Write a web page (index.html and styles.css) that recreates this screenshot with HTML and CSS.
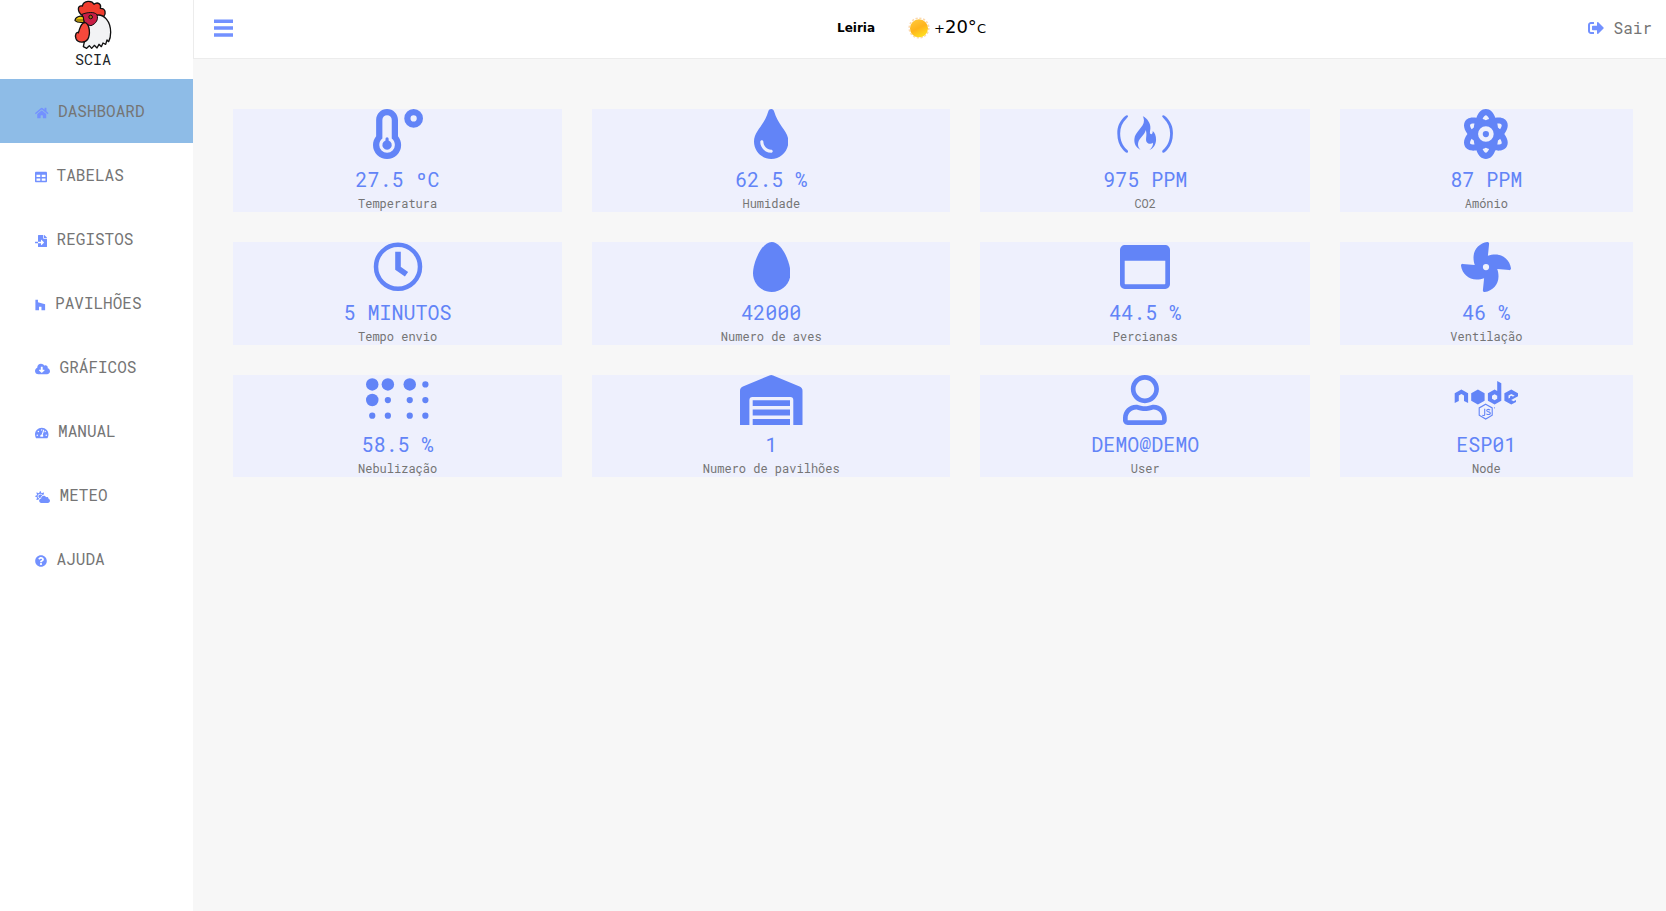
FILE: index.html
```html
<!DOCTYPE html>
<html lang="pt">
<head>
<meta charset="utf-8">
<title>SCIA</title>
<link rel="stylesheet" href="styles.css">
</head>
<body>
<div class="app">
  <aside class="sidebar">
    <div class="brand">
      <svg class="brand-logo" viewBox="218 0 120 150">
        <path d="M247 47C230 37 230 14 246 18C250 1 275 0 281 13C292 4 304 12 300 25C316 25 318 40 310 50L290 58Z" fill="#f03d2e" stroke="#111" stroke-width="4" stroke-linejoin="round"/>
        <path d="M286 46C312 40 331 65 331 97C331 109 329 118 325 125L320 120L316 133L308 129L303 140L296 133L290 144L282 136L274 145L267 137L259 145L249 140L252 126L264 104L262 74Z" fill="#f2f3f5" stroke="#111" stroke-width="4" stroke-linejoin="round"/>
        <path d="M245 43C260 37 281 34 290 44C295 59 287 71 272 77L254 73Z" fill="#c81e45" stroke="#111" stroke-width="3"/>
        <path d="M253 67C270 72 270 105 262 118C255 129 233 130 227 116C222 102 230 95 234 98C239 88 238 72 253 67Z" fill="#f6483b" stroke="#111" stroke-width="4"/>
        <path d="M224 62C224 52 240 45 249 51L251 68C242 66 232 70 224 62Z" fill="#f2c90d" stroke="#111" stroke-width="3.500"/>
        <path d="M228 60H248" stroke="#111" stroke-width="2"/>
        <circle cx="271" cy="51" r="5.500" fill="#a06a10" stroke="#111" stroke-width="3"/>
      </svg>
      <span class="brand-name">SCIA</span>
    </div>
    <nav class="menu">
      <a class="menu-item active"><svg viewBox="0 0 576 512"><path d="M280.37 148.26L96 300.11V464a16 16 0 0 0 16 16l112.06-.29a16 16 0 0 0 15.92-16V368a16 16 0 0 1 16-16h64a16 16 0 0 1 16 16v95.64a16 16 0 0 0 16 16.05L464 480a16 16 0 0 0 16-16V300L295.67 148.26a12.19 12.19 0 0 0-15.3 0zM571.6 251.47L488 182.56V44.05a12 12 0 0 0-12-12h-56a12 12 0 0 0-12 12v72.61L318.47 43a48 48 0 0 0-61 0L4.34 251.47a12 12 0 0 0-1.6 16.9l25.5 31A12 12 0 0 0 45.15 301l235.22-193.74a12.19 12.19 0 0 1 15.3 0L530.9 301a12 12 0 0 0 16.9-1.6l25.5-31a12 12 0 0 0-1.7-16.93z"/></svg> DASHBOARD</a>
      <a class="menu-item"><svg viewBox="0 0 512 512"><path d="M464 32H48C21.49 32 0 53.49 0 80v352c0 26.51 21.49 48 48 48h416c26.51 0 48-21.49 48-48V80c0-26.51-21.49-48-48-48zM224 416H64v-96h160v96zm0-160H64v-96h160v96zm224 160H288v-96h160v96zm0-160H288v-96h160v96z"/></svg> TABELAS</a>
      <a class="menu-item"><svg viewBox="0 0 512 512"><path d="M16 288c-8.8 0-16 7.2-16 16v32c0 8.8 7.2 16 16 16h112v-64zm489-183L407.1 7c-4.500-4.500-10.600-7-17-7H384v128h128v-6.100c0-6.300-2.500-12.400-7-16.900zm-153 31V0H152c-13.300 0-24 10.700-24 24v264h128v-65.200c0-14.300 17.300-21.400 27.400-11.300L379 308c6.600 6.700 6.600 17.400 0 24l-95.700 96.400c-10.100 10.100-27.400 3-27.400-11.300V352H128v136c0 13.300 10.700 24 24 24h336c13.300 0 24-10.700 24-24V160H376c-13.200 0-24-10.800-24-24z"/></svg> REGISTOS</a>
      <a class="menu-item"><svg viewBox="0 0 448 512"><path d="M275.9 330.7H171.3V480H17V32h109.5v104.5l305.1 85.6V480H275.9z"/></svg> PAVILHÕES</a>
      <a class="menu-item"><svg viewBox="0 0 640 512"><path d="M537.6 226.6c4.1-10.7 6.4-22.4 6.4-34.6 0-53-43-96-96-96-19.7 0-38.1 6-53.3 16.2C367 64.2 315.3 32 256 32c-88.4 0-160 71.6-160 160 0 2.7.1 5.4.2 8.1C40.2 219.8 0 273.2 0 336c0 79.5 64.5 144 144 144h368c70.7 0 128-57.3 128-128 0-61.9-44-113.6-102.4-125.4zm-132.9 88.7L299.3 420.7c-6.2 6.2-16.4 6.2-22.6 0L171.3 315.3c-10.1-10.1-2.9-27.3 11.3-27.3H248V176c0-8.8 7.2-16 16-16h48c8.8 0 16 7.2 16 16v112h65.4c14.2 0 21.4 17.2 11.3 27.3z"/></svg> GRÁFICOS</a>
      <a class="menu-item"><svg viewBox="0 0 576 512"><path d="M288 32C128.94 32 0 160.94 0 320c0 52.8 14.25 102.26 39.06 144.8 5.61 9.62 16.3 15.2 27.44 15.2h443c11.14 0 21.83-5.58 27.44-15.2C561.75 422.26 576 372.8 576 320c0-159.06-128.94-288-288-288zm0 64c14.71 0 26.58 10.13 30.32 23.65-1.11 2.26-2.64 4.23-3.45 6.67l-9.22 27.67c-5.13 3.49-10.97 6.01-17.64 6.01-17.67 0-32-14.33-32-32S270.33 96 288 96zM96 384c-17.67 0-32-14.33-32-32s14.33-32 32-32 32 14.33 32 32-14.33 32-32 32zm48-160c-17.67 0-32-14.33-32-32s14.33-32 32-32 32 14.33 32 32-14.33 32-32 32zm246.77-72.41l-61.33 184C343.13 347.33 352 364.54 352 384c0 11.72-3.38 22.55-8.88 32H232.88c-5.5-9.45-8.88-20.28-8.88-32 0-33.94 26.5-61.43 59.9-63.59l61.34-184.01c4.17-12.56 17.73-19.45 30.36-15.17 12.57 4.19 19.35 17.79 15.17 30.36zm14.66 57.2l15.52-46.55c3.47-1.29 7.13-2.23 11.05-2.23 17.67 0 32 14.33 32 32s-14.33 32-32 32c-11.38-.01-20.89-6.28-26.57-15.22zM480 384c-17.67 0-32-14.33-32-32s14.33-32 32-32 32 14.33 32 32-14.33 32-32 32z"/></svg> MANUAL</a>
      <a class="menu-item"><svg viewBox="0 0 640 512"><path d="M575.2 325.7c.2-1.900.8-3.700.8-5.600 0-35.300-28.700-64-64-64-12.600 0-24.200 3.800-34.100 10-17.600-38.800-56.500-66-101.900-66-61.800 0-112 50.100-112 112 0 3 .7 5.800.9 8.700-49.600 3.700-88.900 44.700-88.900 95.300 0 53 43 96 96 96h272c53 0 96-43 96-96 0-42.100-27.200-77.400-64.800-90.400z"/><path fill-rule="evenodd" d="M144.800 303.100c-43.700-43.700-43.700-114.700 0-158.300 43.700-43.700 114.700-43.700 158.400 0 9.700 9.700 16.900 20.900 22.300 32.700 9.800-3.700 20.100-6 30.700-7.500L386 81.100c4-11.900-7.300-23.100-19.200-19.200L279 91.200 237.500 8.400C232-2.800 216-2.800 210.400 8.400L169 91.200 81.100 61.900C69.300 58 58 69.300 61.900 81.100l29.300 87.800-82.800 41.500c-11.200 5.600-11.200 21.500 0 27.100l82.800 41.400-29.300 87.800c-4 11.900 7.300 23.100 19.200 19.200l76.100-25.400c6.100-14.900 14.900-28.800 26.200-40.800-14-4-27-6-38.600-16.600z"/><path d="M144 224c0 44 36 80 80 80 4 0 6-1 9-1 8-50 38-90 76-112-14-33-46-47-85-47-44 0-80 36-80 80z"/></svg> METEO</a>
      <a class="menu-item"><svg viewBox="0 0 512 512"><path d="M504 256c0 136.997-111.043 248-248 248S8 392.997 8 256C8 119.083 119.043 8 256 8s248 111.083 248 248zM262.655 90c-54.497 0-89.255 22.957-116.549 63.758-3.536 5.286-2.353 12.415 2.715 16.258l34.699 26.31c5.205 3.947 12.621 3.008 16.665-2.122 17.864-22.658 30.113-35.797 57.303-35.797 20.429 0 45.698 13.148 45.698 32.958 0 14.976-12.363 22.667-32.534 33.976C247.128 238.528 216 254.941 216 296v4c0 6.627 5.373 12 12 12h56c6.627 0 12-5.373 12-12v-1.333c0-28.462 83.186-29.647 83.186-106.667 0-58.002-60.165-102-116.531-102zM256 338c-25.365 0-46 20.635-46 46 0 25.364 20.635 46 46 46s46-20.636 46-46c0-25.365-20.635-46-46-46z"/></svg> AJUDA</a>
    </nav>
  </aside>
  <div class="page">
    <header class="topbar">
      <svg class="burger" viewBox="0 0 19 18"><path d="M0 .500h19v3.500H0zM0 7.300h19v3.500H0zM0 14.200h19v3.500H0z"/></svg>
      <div class="weather">
        <span class="city">Leiria</span>
        <svg class="sun" viewBox="0 0 22 22">
          <defs><linearGradient id="sunfill" x1="0.2" y1="0" x2="0.7" y2="1"><stop offset="0" stop-color="#ffc93c"/><stop offset=".5" stop-color="#ffb31a"/><stop offset="1" stop-color="#ffe21f"/></linearGradient></defs>
          <circle cx="11" cy="11" r="9.800" fill="none" stroke="#fcd9ae" stroke-width="1.600" stroke-dasharray="2.200 1.650"/>
          <circle cx="11" cy="11.300" r="9" fill="url(#sunfill)"/>
        </svg>
        <span class="temp"><small>+</small>20°<small class="unit">C</small></span>
      </div>
      <a class="logout"><svg viewBox="0 0 512 512"><path d="M497 273L329 441c-15 15-41 4.500-41-17v-96H152c-13.300 0-24-10.700-24-24v-96c0-13.300 10.700-24 24-24h136V88c0-21.400 25.900-32 41-17l168 168c9.300 9.400 9.300 24.600 0 34zM192 436v-40c0-6.600-5.400-12-12-12H96c-17.700 0-32-14.300-32-32V160c0-17.700 14.300-32 32-32h84c6.600 0 12-5.400 12-12V76c0-6.600-5.400-12-12-12H96c-53 0-96 43-96 96v192c0 53 43 96 96 96h84c6.600 0 12-5.400 12-12z"/></svg> Sair</a>
    </header>
    <main class="cards">
      <section class="card">
        <svg viewBox="0 0 512 512"><path fill-rule="evenodd" d="M256 112C256 50 206 0 144 0S32 50 32 112V278.500C12 303 0 334 0 368a144 144 0 0 0 288 0c0-34-12-65-32-89.500zM192 112v190c20 16 32 40 32 66a80 80 0 0 1-160 0c0-26 12-50 32-66V112a48 48 0 0 1 96 0zM416 0a96 96 0 1 0 0 192 96 96 0 0 0 0-192zm0 64a32 32 0 1 1 0 64 32 32 0 0 1 0-64z"/><path d="M128 323v-18a16 16 0 0 1 32 0v18a48 48 0 1 1-32 0z"/></svg>
        <div class="value">27.5 ºC</div><div class="label">Temperatura</div>
      </section>
      <section class="card">
        <svg viewBox="0 0 352 512"><path d="M205.22 22.09c-7.94-28.78-49.44-30.12-58.44 0C100.01 179.85 0 222.72 0 333.91 0 432.35 78.72 512 176 512s176-79.65 176-178.09c0-111.75-99.79-153.34-146.78-311.82zM176 448c-61.75 0-112-50.25-112-112 0-8.84 7.16-16 16-16s16 7.16 16 16c0 44.11 35.89 80 80 80 8.84 0 16 7.16 16 16s-7.16 16-16 16z"/></svg>
        <div class="value">62.5 %</div><div class="label">Humidade</div>
      </section>
      <section class="card">
        <svg viewBox="0 0 576 512"><path id="paren" d="M97.220 96.210c10.360-10.650 16-17.120 16-21.900 0-2.760-1.920-5.510-3.830-7.420A14.810 14.810 0 0 0 101 64.050c-8.480 0-20.920 8.790-35.840 25.690C23.680 137 2.510 182.810 3.370 250.340s17.470 117 54.060 161.870C76.220 435.860 90.620 448 100.900 448a13.550 13.550 0 0 0 8.370-3.840c1.910-2.760 3.810-5.630 3.810-8.380 0-5.630-3.860-12.200-13.200-20.550-44.450-42.330-67.320-97-67.480-165C32.250 188.800 54 137.830 97.220 96.210z"/><use href="#paren" transform="translate(576 0) scale(-1 1)"/><path d="M264 75C310 94 345 150 342 196C339 228 333 242 341 254C354 268 368 250 366 226C387 245 401 276 400 314C398 366 374 401 332 420C360 396 373 369 367 346C351 362 318 359 303 337C288 307 312 264 294 214C283 262 243 287 223 326C207 368 218 397 241 419C192 394 174 353 178 308C183 230 278 188 276 118C275 99 270 86 264 75z"/></svg>
        <div class="value">975 PPM</div><div class="label">CO2</div>
      </section>
      <section class="card">
        <svg viewBox="0 0 448 512"><path fill-rule="evenodd" d="M413.03 256c40.13-54.89 41.51-98.62 25.14-128-10.83-19.52-40.38-51.33-117.41-38.64C300.79 34.04 267.34 0 223.99 0s-76.8 34.04-96.76 89.36C50.09 76.67 20.63 108.48 9.8 128c-16.37 29.38-14.99 73.12 25.14 128-40.13 54.88-41.51 98.62-25.14 128 29.21 52.34 101.68 43.58 117.42 38.64 19.97 55.32 53.41 89.36 96.77 89.36s76.8-34.04 96.76-89.36c15.73 4.94 88.2 13.7 117.41-38.64 16.37-29.39 15-73.12-25.13-128zM63.38 352c-4.03-7.21-.19-24.8 14.95-48.29 6.96 6.53 14.2 12.89 21.87 19.18 1.71 13.71 4 27.08 6.76 40.08-24.56.89-39.89-4.37-43.58-10.97zM100.2 189.12c-7.66 6.29-14.9 12.65-21.87 19.18-15.13-23.5-18.97-41.09-14.95-48.3 3.41-6.14 16.39-11.47 37.92-11.47 1.71 0 3.87.3 5.69.37a472.19 472.19 0 0 0-6.79 40.22zM223.99 64c9.47 0 22.79 13.52 33.86 37.26-11.19 3.7-22.44 8-33.86 12.86-11.42-4.86-22.67-9.16-33.86-12.86C201.2 77.52 214.52 64 223.99 64zM223.99 448c-9.47 0-22.79-13.52-33.86-37.26 11.19-3.7 22.44-8 33.86-12.86 11.42 4.86 22.67 9.16 33.86 12.86C246.78 434.48 233.46 448 223.99 448zM224 336a80 80 0 1 1 0-160 80 80 0 0 1 0 160zM384.6 352c-3.69 6.6-19.02 11.86-43.58 10.95 2.76-12.99 5.05-26.37 6.76-40.08 7.66-6.29 14.9-12.65 21.87-19.18 15.14 23.51 18.98 41.1 14.95 48.31zM369.65 208.3c-6.96-6.53-14.2-12.89-21.87-19.18-1.71-13.72-4-27.11-6.79-40.22 1.82-.07 3.97-.37 5.69-.37 21.52 0 34.51 5.34 37.92 11.47 4.01 7.21.17 24.8-14.95 48.3z"/><circle cx="224" cy="256" r="32"/></svg>
        <div class="value">87 PPM</div><div class="label">Amónio</div>
      </section>
      <section class="card">
        <svg viewBox="0 0 50 50"><g fill="none" stroke="#6284f7"><circle cx="25" cy="24.800" r="22" stroke-width="4.500"/><path d="M25 9.700V26.400L33.500 32.300" stroke-width="5.600"/></g></svg>
        <div class="value">5 MINUTOS</div><div class="label">Tempo envio</div>
      </section>
      <section class="card">
        <svg viewBox="0 0 384 512"><path d="M192 0C86 0 0 214 0 320s86 192 192 192 192-86 192-192S298 0 192 0z"/></svg>
        <div class="value">42000</div><div class="label">Numero de aves</div>
      </section>
      <section class="card">
        <svg viewBox="0 0 50 50"><path fill-rule="evenodd" d="M4.700 3.100H45.300A4.700 4.700 0 0 1 50 7.800V42.200A4.700 4.700 0 0 1 45.300 46.900H4.700A4.700 4.700 0 0 1 0 42.200V7.800A4.700 4.700 0 0 1 4.700 3.100zM4.700 18.700V41.600q0 .600.600.600H44.700q.600 0 .600-.600V18.700z"/></svg>
        <div class="value">44.5 %</div><div class="label">Percianas</div>
      </section>
      <section class="card">
        <svg viewBox="0 0 512 512"><path d="M352.57 128c-28.09 0-54.09 4.52-77.06 12.86l12.41-123.11C289 7.31 279.81-1.18 269.33.13 189.63 10.13 128 77.64 128 159.43c0 28.09 4.52 54.09 12.86 77.06L17.75 224.08C7.31 223-1.18 232.19.13 242.67c10 79.7 77.51 141.33 159.3 141.33 28.09 0 54.09-4.52 77.06-12.86l-12.41 123.11c-1.05 10.43 8.11 18.93 18.59 17.62 79.7-10 141.33-77.51 141.33-159.3 0-28.09-4.52-54.09-12.86-77.06l123.11 12.41c10.44 1.05 18.93-8.11 17.62-18.59-10-79.7-77.51-141.33-159.3-141.33zM256 288a32 32 0 1 1 32-32 32 32 0 0 1-32 32z"/></svg>
        <div class="value">46 %</div><div class="label">Ventilação</div>
      </section>
      <section class="card last-row">
        <svg viewBox="0 0 640 512"><circle cx="64" cy="96" r="64"/><circle cx="224" cy="96" r="64"/><circle cx="448" cy="96" r="64"/><circle cx="608" cy="96" r="32"/><circle cx="64" cy="256" r="64"/><circle cx="224" cy="256" r="32"/><circle cx="448" cy="256" r="32"/><circle cx="608" cy="256" r="32"/><circle cx="64" cy="416" r="32"/><circle cx="224" cy="416" r="32"/><circle cx="448" cy="416" r="32"/><circle cx="608" cy="416" r="32"/></svg>
        <div class="value">58.5 %</div><div class="label">Nebulização</div>
      </section>
      <section class="card last-row">
        <svg viewBox="0 0 62.5 50"><path d="M0 50V15.700q0-3.100 2.900-4.300L29.400.4q1.850-.8 3.700 0L59.600 11.400q2.900 1.200 2.900 4.300V50H53.300V25q0-3-3-3H12.400q-3 0-3 3V50zM12.700 25.200H50V31.100H12.700zM12.700 34.500H50V40.500H12.700zM12.700 43.900H50V50H12.700z"/></svg>
        <div class="value">1</div><div class="label">Numero de pavilhões</div>
      </section>
      <section class="card last-row">
        <svg viewBox="0 0 448 512"><path d="M313.6 304c-28.7 0-42.5 16-89.6 16-47.1 0-60.8-16-89.6-16C60.2 304 0 364.2 0 438.4V464c0 26.5 21.5 48 48 48h352c26.5 0 48-21.5 48-48v-25.6c0-74.2-60.2-134.4-134.4-134.4zM400 464H48v-25.6c0-47.6 38.8-86.4 86.4-86.4 14.6 0 38.3 16 89.6 16 51.7 0 74.9-16 89.6-16 47.6 0 86.4 38.8 86.4 86.4V464zM224 288c79.5 0 144-64.5 144-144S303.5 0 224 0 80 64.5 80 144s64.5 144 144 144zm0-240c52.9 0 96 43.1 96 96s-43.1 96-96 96-96-43.1-96-96 43.1-96 96-96z"/></svg>
        <div class="value">DEMO@DEMO</div><div class="label">User</div>
      </section>
      <section class="card last-row">
        <svg viewBox="-0.7 0 64 50"><path fill-rule="evenodd" d="M0 28V18.300L6.700 14.500L13.400 18.300V28L9.300 26V20.500L6.700 19L4.100 20.500V26zM16.500 18.300L23.200 14.500L29.900 18.300V25.800L23.200 29.600L16.500 25.800zM42.500 6L46.600 8.200V25.800L39.900 29.600L33.200 25.800V18.300L39.900 14.500L42.500 16zM39.900 19.300L37.300 20.800V23.700L39.900 25.200L42.500 23.700V20.800zM49.700 18.300L56.600 14.500L63.300 18.300V21.200L56.500 25L58.800 26.200L61.300 25L61.300 27L56.600 29.600L49.700 25.800zM56.600 19L53.800 20.600V23.500L60 20.800z"/><path d="M56.600 20.700L58 21.500V23L56.600 23.800L55.300 23V21.500z"/><path fill="none" stroke="#6284f7" stroke-width="1.100" d="M31 29.200L37.500 32.900V40.300L31 44L24.500 40.300V32.900zM30 33.800V39.400Q30 41 27.600 40.200M35.500 34.900Q32.200 33.700 32 35.500Q32.200 36.800 33.900 36.900Q35.800 37.200 35.600 38.500Q35 40.300 31.700 39"/><circle cx="39.800" cy="32.800" r=".6"/></svg>
        <div class="value">ESP01</div><div class="label">Node</div>
      </section>
    </main>
  </div>
</div>
</body>
</html>
```
FILE: styles.css
```css
body {
  margin: 0;
  background: #f7f7f7;
  font-family: "Roboto Mono", "Liberation Mono", monospace;
  font-weight: 400;
  font-size: 16px;
  color: #757575;
}
.app { display: flex; min-height: 911px; }
.sidebar { width: 193px; flex: none; background: #fff; }
.brand {
  height: 79px;
  box-sizing: border-box;
  padding-right: 7px;
  display: flex;
  flex-direction: column;
  align-items: center;
}
.brand-logo { width: 40px; height: 50px; flex: none; }
.brand-name { font-size: 15px; line-height: 18px; color: #212529; }
.menu { display: flex; flex-direction: column; }
.menu-item {
  height: 64px;
  line-height: 64px;
  padding-left: 35px;
  white-space: nowrap;
}
.menu-item svg { height: 12px; fill: #7391ff; vertical-align: -1.5px; }
.menu-item.active { background: #8ebce7; }
.page { flex: 1; display: flex; flex-direction: column; }
.topbar {
  height: 59px;
  box-sizing: border-box;
  background: #fff;
  border-left: 1px solid #ececec;
  border-bottom: 1px solid #ececec;
  display: grid;
  grid-template-columns: 1fr auto 1fr;
  align-items: center;
  padding: 0 14px 2px 20px;
}
.burger { width: 19px; height: 18px; fill: #7391ff; }
.weather {
  display: flex;
  align-items: center;
  font-family: "DejaVu Sans", sans-serif;
  color: #000;
  margin-right: 43px;
}
.city { font-size: 12px; font-weight: 700; margin-right: 33px; }
.sun { width: 22px; height: 22px; margin-right: 4px; }
.temp { font-size: 18px; line-height: 22px; }
.temp small { font-size: 13px; }
.logout { justify-self: end; line-height: 24px; white-space: nowrap; }
.logout svg { height: 16px; fill: #7391ff; vertical-align: -2px; }
.cards {
  display: grid;
  grid-template-columns: 329.2px 358.2px 329.7px 292.6px;
  grid-template-rows: 103px 103px 102px;
  gap: 30px;
  padding: 50px 0 0 40px;
}
.card {
  background: #eef0fd;
  display: flex;
  flex-direction: column;
  align-items: center;
}
.card svg { height: 50px; flex: none; fill: #6284f7; }
.value { margin-top: 5px; font-size: 20px; line-height: 30px; color: #6284f7; }
.label { font-size: 12px; line-height: 18px; }
.last-row .value { margin-top: 4px; }
```
